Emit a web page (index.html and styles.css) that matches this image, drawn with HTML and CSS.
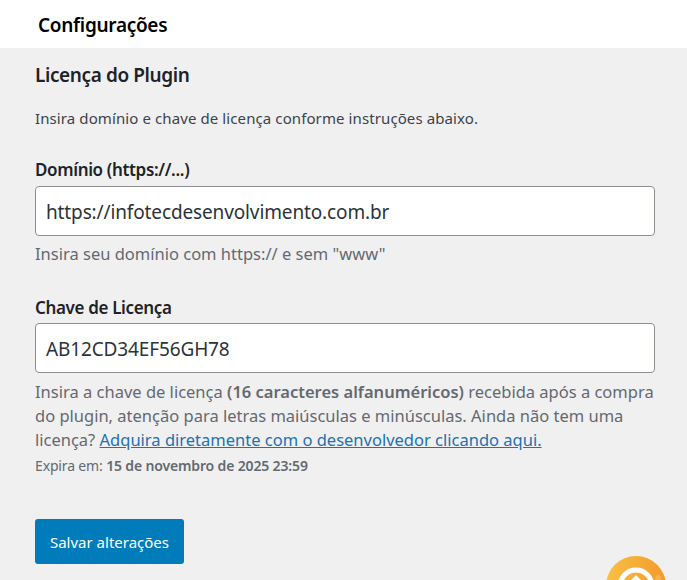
FILE: index.html
```html
<!DOCTYPE html>
<html lang="pt-BR">
<head>
<meta charset="utf-8">
<title>Configurações</title>
<link rel="stylesheet" href="styles.css">
</head>
<body>
<header class="topbar"><h1 class="page-title">Configurações</h1></header>
<main class="content">
  <h2 class="section-title">Licença do Plugin</h2>
  <p class="intro">Insira domínio e chave de licença conforme instruções abaixo.</p>
  <form class="form">
    <div class="field field-domain">
      <label class="label" for="dominio">Domínio (https://...)</label>
      <input class="input" id="dominio" type="text" value="https://infotecdesenvolvimento.com.br">
      <p class="help">Insira seu domínio com https:// e sem "www"</p>
    </div>
    <div class="field field-key">
      <label class="label" for="chave">Chave de Licença</label>
      <input class="input" id="chave" type="text" value="AB12CD34EF56GH78">
      <p class="help help-long">Insira a chave de licença <strong>(16 caracteres alfanuméricos)</strong> recebida após a compra do plugin, atenção para letras maiúsculas e minúsculas. Ainda não tem uma licença? <a href="#">Adquira diretamente com o desenvolvedor clicando aqui.</a></p>
      <p class="expiry">Expira em: <strong>15 de novembro de 2025 23:59</strong></p>
    </div>
    <button class="save" type="button">Salvar alterações</button>
  </form>
</main>
<div class="widget" aria-hidden="true">
  <svg viewBox="0 0 60 60" width="60" height="60">
    <defs><linearGradient id="g" x1="0" y1="0" x2="1" y2="0"><stop offset="0" stop-color="#f9c044"/><stop offset="1" stop-color="#f49a2a"/></linearGradient></defs>
    <circle cx="30" cy="30" r="30" fill="url(#g)"/>
    <circle cx="30" cy="30" r="16" fill="none" stroke="#fff" stroke-width="5"/>
    <path d="M30 19 L41 30 L30 41 L19 30 Z" fill="#fff"/>
    <path d="M30 25 L35 30 L30 35 L25 30 Z" fill="#f7b23a"/>
    <circle cx="52" cy="22" r="3" fill="#f9b24a"/>
  </svg>
</div>
</body>
</html>
```
FILE: styles.css
```css
* { box-sizing: border-box; }
html, body { margin: 0; height: 100%; }
body {
  position: relative;
  height: 580px;
  overflow: hidden;
  background: #f0f0f1;
  font-family: "Noto Sans", "Open Sans", sans-serif;
  color: #3c434a;
}
.topbar { height: 48px; background: #fff; padding: 13px 38px 0; }
.page-title { margin: 0; font-size: 19px; line-height: 24px; font-weight: 600; color: #000; letter-spacing: -0.3px; }
.content { padding: 0 32px 0 35px; }
.section-title { margin: 16px 0 0; font-size: 19px; line-height: 23px; font-weight: 600; color: #1d2327; letter-spacing: -0.4px; }
.intro { margin: 21px 0 0; font-size: 15px; line-height: 20px; letter-spacing: 0.1px; }
.form { margin: 0; }
.field-domain { margin-top: 30px; }
.field-key { margin-top: 30px; }
.label { display: block; font-size: 17px; line-height: 24px; font-weight: 600; color: #1d2327; letter-spacing: -0.35px; }
.input {
  display: block;
  width: 620px;
  height: 50px;
  margin-top: 4px;
  padding: 2px 10px 0;
  border: 1px solid #8c8f94;
  border-radius: 4px;
  background: #fff;
  font: 19px "Noto Sans", "Open Sans", sans-serif;
  letter-spacing: -0.13px;
  color: #2c3338;
}
.field-key .input { margin-top: 3px; }
.help { margin: 6px 0 0; font-size: 16.5px; line-height: 24px; color: #646970; }
.help-long { margin-top: 7px; }
.help a { color: #2271b1; }
.help strong, .expiry strong { font-weight: 600; }
.expiry { margin: 6px 0 0; font-size: 14px; line-height: 16px; color: #646970; letter-spacing: -0.15px; }
.save {
  display: block;
  width: 149px;
  height: 45px;
  margin-top: 45px;
  border: 0;
  border-radius: 3px;
  background: #007cba;
  color: #fff;
  font: 15px "Noto Sans", "Open Sans", sans-serif;
}
.widget { position: absolute; left: 606px; top: 556px; width: 60px; height: 60px; }
```
